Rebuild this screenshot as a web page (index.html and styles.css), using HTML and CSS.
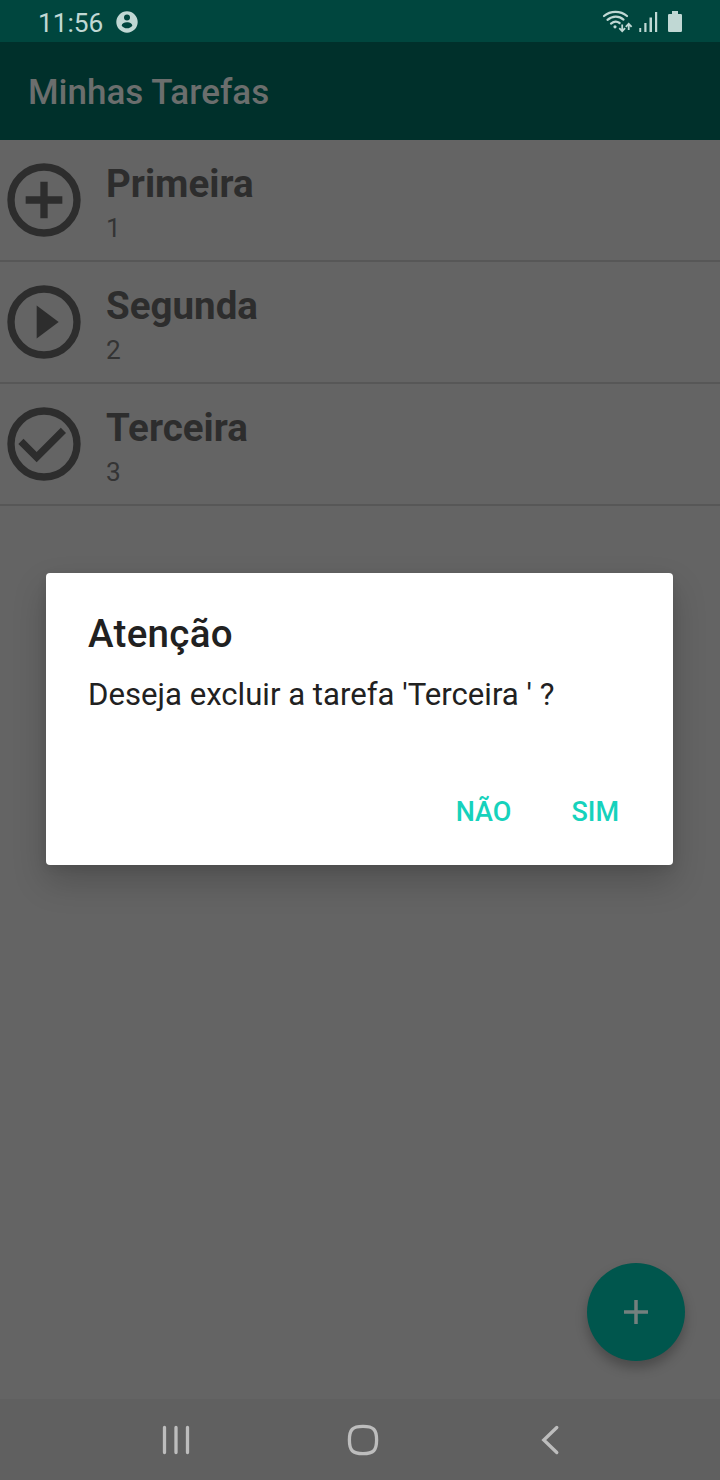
FILE: index.html
```html
<!DOCTYPE html>
<html lang="pt-BR">
<head>
<meta charset="utf-8">
<title>Minhas Tarefas</title>
<link rel="stylesheet" href="styles.css">
</head>
<body>
<div class="screen">
  <header class="status-bar">
    <span class="clock">11:56</span>
    <svg class="account" viewBox="0 0 22 22"><path fill-rule="evenodd" d="M11 .3a10.7 10.7 0 1 0 0 21.4A10.7 10.7 0 0 0 11 .3zM11 3.5a3 3 0 1 1 0 6 3 3 0 0 1 0-6zM11 11.3c3 0 5.3 1.5 5.3 3.4-1.100 1.500-3 2.600-5.300 2.600s-4.200-1.100-5.300-2.600c0-1.900 2.300-3.400 5.300-3.400z"/></svg>
    <svg class="signals" viewBox="0 0 84 30">
      <g fill="none" stroke="currentColor" stroke-width="2.200" stroke-linecap="round">
        <path d="M4 11C10.500 5.400 20.500 5.400 27 11"/><path d="M7.500 14.900C12.500 10.600 19 10.600 23.500 14.600"/><path d="M11 18.600C13.800 16.200 17.200 16.200 19.600 18"/>
        <path stroke-width="1.800" stroke-linecap="butt" d="M22.200 19.500V25M19.300 23.200L22.200 26.300L25.100 23.200M28.700 25V19.500M25.800 21.800L28.700 18.700L31.600 21.800"/>
      </g>
      <circle cx="15" cy="21.800" r="1.600"/>
      <path d="M39.300 23H41.200V27H39.300zM44.300 18H46.500V27H44.300zM49.500 12.500H52V27H49.500zM55 7H57.200V27H55z"/>
      <path d="M72 6h6v3h2.800q1.200 0 1.200 1.200v15.600q0 1.200-1.200 1.200H69.200q-1.200 0-1.200-1.200V10.200Q68 9 69.200 9H72z"/>
    </svg>
  </header>
  <div class="app-bar"><h1 class="app-title">Minhas Tarefas</h1></div>
  <main class="content">
    <ul class="tasks">
      <li class="task">
        <svg class="task-icon" viewBox="0 0 24 24"><circle class="ring" cx="12" cy="12" r="9"/><path d="M13 7h-2v4H7v2h4v4h2v-4h4v-2h-4z"/></svg>
        <div class="task-text"><span class="task-name">Primeira</span><span class="task-note">1</span></div>
      </li>
      <li class="task">
        <svg class="task-icon" viewBox="0 0 24 24"><circle class="ring" cx="12" cy="12" r="9"/><path d="M10 16.500l6-4.500-6-4.500z"/></svg>
        <div class="task-text"><span class="task-name">Segunda</span><span class="task-note">2</span></div>
      </li>
      <li class="task">
        <svg class="task-icon" viewBox="0 0 24 24"><circle class="ring" cx="12" cy="12" r="9"/><path d="M16.590 7.580L10 14.170l-3.590-3.580L5 12l5 5 8-8z"/></svg>
        <div class="task-text"><span class="task-name">Terceira</span><span class="task-note">3</span></div>
      </li>
    </ul>
  </main>
  <nav class="nav-bar">
    <svg class="nav-icon" viewBox="0 0 32 32"><path d="M4.500 3.500v25M16 3.500v25M27.500 3.500v25"/></svg>
    <svg class="nav-icon" viewBox="0 0 32 32"><path d="M16 2.400C26.500 2.400 29.600 5.500 29.600 16S26.500 29.600 16 29.600 2.400 26.500 2.400 16 5.500 2.400 16 2.400z"/></svg>
    <svg class="nav-icon" viewBox="0 0 32 32"><path d="M22.800 3.500L9.800 16l13 12.500"/></svg>
  </nav>
  <button class="fab" aria-label="Adicionar"><svg class="fab-icon" viewBox="0 0 24 24"><path d="M12 0v24M0 12h24"/></svg></button>
  <section class="dialog" role="alertdialog">
    <h2 class="dialog-title">Atenção</h2>
    <p class="dialog-message">Deseja excluir a tarefa 'Terceira ' ?</p>
    <div class="dialog-actions"><button class="action no">NÃO</button><button class="action yes">SIM</button></div>
  </section>
</div>
</body>
</html>
```
FILE: styles.css
```css
* { box-sizing: border-box; }
body { margin: 0; font-family: Roboto, sans-serif; }
h1, h2, p, ul { margin: 0; padding: 0; }
button { border: 0; padding: 0; background: none; font-family: inherit; }
.screen { position: relative; display: flex; flex-direction: column; width: 720px; height: 1480px; overflow: hidden; background: #646464; }
.status-bar { display: flex; align-items: flex-start; height: 42px; padding: 0 36px 0 38px; background: #00463e; color: #c0d8d4; }
.clock { width: 78px; font-size: 26.250px; line-height: 30px; padding-top: 8px; }
.account { width: 22px; height: 22px; margin-top: 11px; fill: currentColor; }
.signals { width: 84px; height: 30px; margin: 5px 0 0 auto; fill: currentColor; }
.app-bar { display: flex; align-items: center; height: 98px; padding: 2px 0 0 28px; background: #00302b; }
.app-title { font-size: 35px; line-height: 41px; font-weight: 500; color: #6b6e6d; }
.content { flex: 1; }
.tasks { list-style: none; }
.task { display: flex; align-items: center; gap: 18px; height: 122px; border-bottom: 2px solid #575757; }
.task-icon { width: 88px; height: 88px; fill: #2d2d2d; }
.ring { fill: none; stroke: #2d2d2d; stroke-width: 2; }
.task-text { display: flex; flex-direction: column; padding-top: 12px; color: #2d2d2d; }
.task-name { font-size: 38.500px; line-height: 44px; font-weight: 700; }
.task-note { font-size: 26.250px; line-height: 44px; color: #343434; }
.nav-bar { display: flex; justify-content: space-between; align-items: center; height: 81px; padding: 0 154px 0 160px; background: #606060; }
.nav-icon { width: 32px; height: 32px; fill: none; stroke: #bdbdbd; stroke-width: 3.300; stroke-linecap: round; }
.fab { position: absolute; left: 587px; top: 1263px; display: grid; place-items: center; width: 98px; height: 98px; border-radius: 50%; background: #00564d; box-shadow: 0 7px 12px rgba(0, 0, 0, .26); }
.fab-icon { width: 24px; height: 24px; fill: none; stroke: #74807e; stroke-width: 3.500; }
.dialog { position: absolute; left: 46px; top: 573px; width: 627px; height: 292px; padding: 38px 42px 0; border-radius: 4px; background: #fff; box-shadow: 0 16px 34px rgba(0, 0, 0, .2), 0 3px 10px rgba(0, 0, 0, .08); color: #212121; }
.dialog-title { font-size: 38.500px; line-height: 45px; font-weight: 500; letter-spacing: .3px; }
.dialog-message { margin-top: 20px; font-size: 31.150px; line-height: 37px; }
.dialog-actions { display: flex; justify-content: flex-end; gap: 60px; margin-top: 83px; padding-right: 12px; }
.action { color: #16d2bc; font-size: 27px; line-height: 33px; font-weight: 500; }
```
